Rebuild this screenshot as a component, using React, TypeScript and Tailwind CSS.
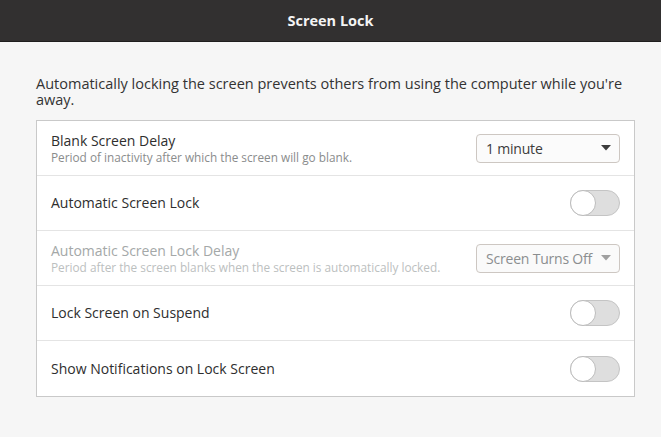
import { useState } from 'react';

function Toggle({ on, onChange }: { on: boolean; onChange: (v: boolean) => void }) {
  return (
    <button
      type="button"
      onClick={() => onChange(!on)}
      className={`relative h-[26px] w-[50px] rounded-full border ${
        on ? 'border-[#c6532a] bg-[#e95420]' : 'border-[#c4c4c4] bg-[#dedede]'
      }`}
    >
      <span
        className={`absolute top-[-1px] h-[26px] w-[26px] rounded-full border border-[#bcbcbc] bg-white ${
          on ? 'right-[-1px]' : 'left-[-1px]'
        }`}
      />
    </button>
  );
}

function Dropdown({ value, disabled }: { value: string; disabled?: boolean }) {
  return (
    <div
      className={`flex h-[29px] w-[144px] items-center justify-between rounded-[4px] border border-[#cdc7c2] pl-[9px] pr-[8px] text-[14px] tracking-[-0.2px] ${
        disabled ? 'bg-[#fafafa] text-[#8b8e8f]' : 'bg-[#fbfbfb] text-[#3c3c3c]'
      }`}
    >
      <span className="whitespace-nowrap">{value}</span>
      <svg width="10" height="6" viewBox="0 0 10 6" className={`shrink-0 ${disabled ? 'fill-[#a0a0a0]' : 'fill-[#3c3c3c]'}`}>
        <path d="M0 0h10L5 5.5z" />
      </svg>
    </div>
  );
}

function Row({
  title,
  subtitle,
  disabled,
  children,
  last,
}: {
  title: string;
  subtitle?: string;
  disabled?: boolean;
  children: React.ReactNode;
  last?: boolean;
}) {
  return (
    <div
      className={`flex h-[55px] items-center justify-between pl-[14px] pr-[14px] ${
        last ? '' : 'border-b border-[#e4e4e4]'
      }`}
    >
      <div className="flex flex-col">
        <span className={`text-[14px] leading-[18px] ${disabled ? 'text-[#a4a8a8]' : 'text-[#2e2e2e]'}`}>
          {title}
        </span>
        {subtitle && (
          <span className={`text-[11.8px] leading-[14px] ${disabled ? 'text-[#bcc0c0]' : 'text-[#8a8c8c]'}`}>
            {subtitle}
          </span>
        )}
      </div>
      {children}
    </div>
  );
}

export default function App() {
  const [autoLock, setAutoLock] = useState(false);
  const [lockSuspend, setLockSuspend] = useState(false);
  const [notif, setNotif] = useState(false);

  return (
    <div className="flex h-[437px] w-[661px] flex-col bg-[#f6f6f6] font-['Open_Sans',sans-serif]">
      <div className="flex h-[42px] shrink-0 items-center justify-center border-b border-[#1f1e1e] bg-[#323030]">
        <span className="text-[14.5px] font-bold text-[#f4f4f4]">Screen Lock</span>
      </div>

      <div className="px-[36px] pt-[34px]">
        <p className="text-[14.5px] leading-[16px] text-[#333]">
          Automatically locking the screen prevents others from using the computer while you're away.
        </p>

        <div className="mt-[12px] w-[599px] border border-[#c9c9c9] bg-white">
          <Row title="Blank Screen Delay" subtitle="Period of inactivity after which the screen will go blank.">
            <Dropdown value="1 minute" />
          </Row>
          <Row title="Automatic Screen Lock">
            <Toggle on={autoLock} onChange={setAutoLock} />
          </Row>
          <Row
            title="Automatic Screen Lock Delay"
            subtitle="Period after the screen blanks when the screen is automatically locked."
            disabled
          >
            <Dropdown value="Screen Turns Off" disabled />
          </Row>
          <Row title="Lock Screen on Suspend">
            <Toggle on={lockSuspend} onChange={setLockSuspend} />
          </Row>
          <Row title="Show Notifications on Lock Screen" last>
            <Toggle on={notif} onChange={setNotif} />
          </Row>
        </div>
      </div>
    </div>
  );
}
